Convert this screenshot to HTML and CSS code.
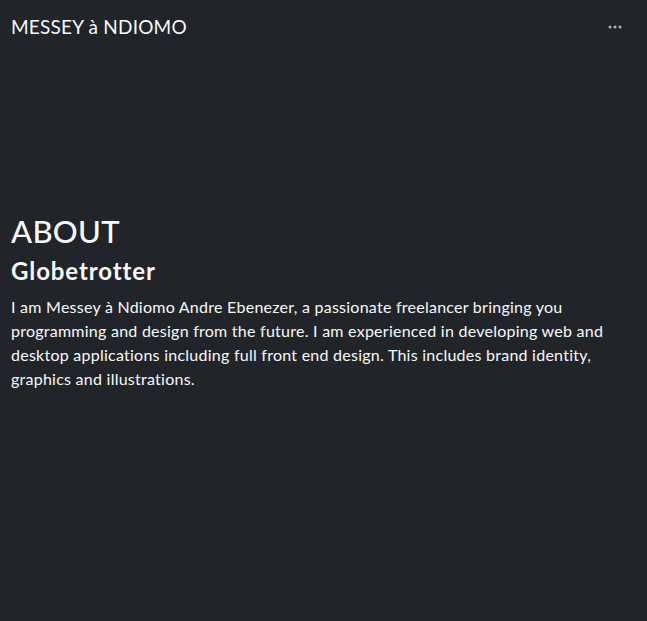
FILE: index.html
```html
<!DOCTYPE html>
<html lang="en">
<head>
<meta charset="utf-8">
<title>MESSEY à NDIOMO</title>
<link rel="stylesheet" href="styles.css">
</head>
<body>
<header class="topbar">
  <span class="brand">MESSEY à NDIOMO</span>
  <button class="menu" aria-label="Menu">
    <svg width="14" height="4" viewBox="0 0 14 4"><circle cx="2" cy="2" r="1.5"/><circle cx="7" cy="2" r="1.5"/><circle cx="12" cy="2" r="1.5"/></svg>
  </button>
</header>
<main class="about">
  <h1 class="title">ABOUT</h1>
  <h2 class="subtitle">Globetrotter</h2>
  <p class="text">I am Messey à Ndiomo Andre Ebenezer, a passionate freelancer bringing you programming and design from the future. I am experienced in developing web and desktop applications including full front end design. This includes brand identity, graphics and illustrations.</p>
</main>
</body>
</html>
```
FILE: styles.css
```css
html, body {
  margin: 0;
  padding: 0;
  height: 100%;
}
body {
  background: #212529;
  color: #f8f9fa;
  font-family: Lato, "Noto Sans", sans-serif;
}
.topbar {
  display: flex;
  justify-content: space-between;
  align-items: center;
  height: 54px;
  padding: 0 11px;
}
.brand {
  font-size: 19px;
  line-height: 30px;
  letter-spacing: 0.2px;
}
.menu {
  background: none;
  border: 0;
  padding: 0;
  margin-right: 14px;
  display: flex;
  fill: #adb5bd;
}
.about {
  padding: 158px 11px 0;
}
.title {
  margin: 0;
  font-size: 31px;
  font-weight: 500;
  line-height: 38px;
  letter-spacing: 0.3px;
}
.subtitle {
  margin: 5px 0 0;
  font-size: 24px;
  font-weight: 700;
  line-height: 32px;
  letter-spacing: 0.9px;
}
.text {
  margin: 8px 0 0;
  font-size: 16px;
  line-height: 24px;
  letter-spacing: 0.25px;
}
```
